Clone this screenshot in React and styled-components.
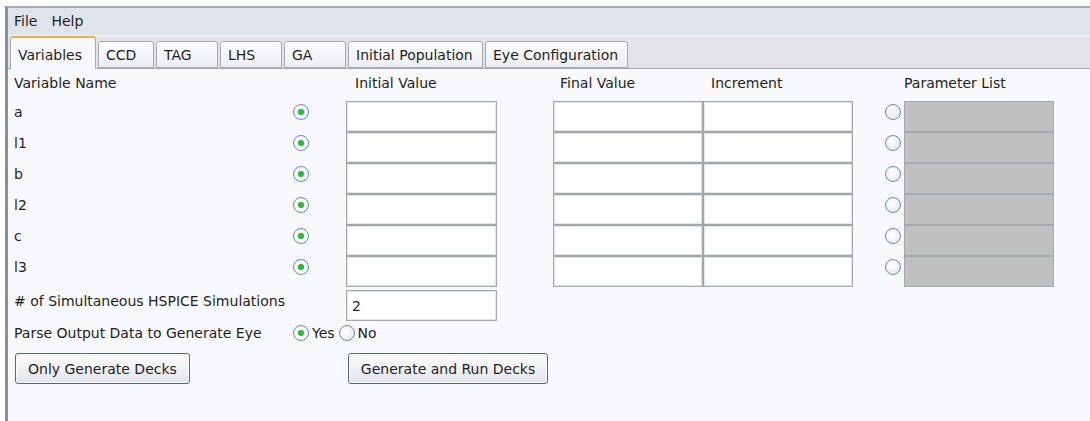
import styled, { createGlobalStyle } from "styled-components";

const GlobalStyle = createGlobalStyle`
  html, body {
    margin: 0;
    background: #ffffff;
  }
  body {
    font-family: "DejaVu Sans", "Liberation Sans", sans-serif;
    font-size: 14px;
    color: #1e1e22;
  }
`;

const Frame = styled.div`
  margin: 6px 0 0 5px;
  height: 413px;
  border-left: 3px solid #8a8f98;
  border-top: 2px solid #a7acbd;
  background: #f8f9fc;
  display: flex;
  flex-direction: column;
  overflow: hidden;
`;

const MenuBar = styled.div`
  height: 27px;
  background: #dfe3ec;
  border-bottom: 2px solid #eceef3;
  display: flex;
  align-items: center;
  gap: 14px;
  padding-left: 6px;
`;

const MenuItem = styled.span`
  line-height: 20px;
  margin-top: -2px;
`;

const TabStrip = styled.div`
  height: 32px;
  box-sizing: border-box;
  background: #e2e2e7;
  border-bottom: 1px solid #a3a8b2;
  display: flex;
  align-items: flex-end;
  gap: 2px;
  padding-left: 2px;
`;

const Tab = styled.div`
  width: ${(p) => p.$w}px;
  box-sizing: border-box;
  height: ${(p) => (p.$active ? 33 : 27)}px;
  margin-bottom: ${(p) => (p.$active ? -1 : 0)}px;
  padding: ${(p) => (p.$active ? "3px" : "0")} 7px 0;
  display: flex;
  align-items: center;
  border: 1px solid #a4aab4;
  border-bottom: ${(p) => (p.$active ? "none" : "1px solid #a4aab4")};
  border-top: ${(p) => (p.$active ? "2px solid #f2b040" : "1px solid #a4aab4")};
  border-radius: 3px 3px 0 0;
  background: ${(p) =>
    p.$active ? "#f8f9fc" : "linear-gradient(#fdfdfe, #eceef2)"};
  white-space: nowrap;
`;

const Body = styled.div`
  padding-left: 6px;
  display: flex;
  flex-direction: column;
`;

const HeaderRow = styled.div`
  height: 32px;
  display: flex;
  align-items: flex-start;
  padding-top: 3px;
  box-sizing: border-box;
  line-height: 22px;
`;

const Heading = styled.span`
  width: ${(p) => p.$w}px;
  padding-left: ${(p) => p.$pad || 0}px;
  box-sizing: border-box;
  flex-shrink: 0;
`;

const Row = styled.div`
  height: ${(p) => p.$h || 31}px;
  margin-top: ${(p) => p.$mt || 0}px;
  display: flex;
  align-items: flex-start;
`;

const Label = styled.span`
  width: ${(p) => p.$w || 279}px;
  flex-shrink: 0;
  line-height: 22px;
  white-space: nowrap;
`;

const Radio = styled.span`
  width: 16px;
  height: 16px;
  margin-top: 3px;
  margin-left: ${(p) => p.$ml || 0}px;
  flex-shrink: 0;
  box-sizing: border-box;
  border-radius: 50%;
  border: 1.5px solid #6c8cae;
  background: ${(p) =>
    p.$checked
      ? "radial-gradient(circle, #ffffff 40%, #e6e9ee)"
      : "radial-gradient(circle at 40% 40%, #ffffff 10%, #dcdfe4)"};
  display: flex;
  align-items: center;
  justify-content: center;

  &::after {
    content: "";
    display: ${(p) => (p.$checked ? "block" : "none")};
    width: 6px;
    height: 6px;
    border-radius: 50%;
    background: #2eb83b;
    box-shadow: 0 0 2px #7fd587;
  }
`;

const Field = styled.div`
  width: ${(p) => p.$w || 151}px;
  height: 31px;
  margin-left: ${(p) => p.$ml || 0}px;
  flex-shrink: 0;
  box-sizing: border-box;
  border: 1px solid #a2a7ac;
  box-shadow: inset 0 0 0 1px #e2e4e7;
  background: #ffffff;
  padding: 4px 0 0 5px;
  line-height: 22px;
`;

const ParamBox = styled.div`
  width: 150px;
  height: 31px;
  margin-left: 3px;
  flex-shrink: 0;
  box-sizing: border-box;
  border: 1px solid #a3a9af;
  background: #c0c0c0;
`;

const OptionText = styled.span`
  margin-left: 3px;
  line-height: 22px;
`;

const ButtonRow = styled.div`
  margin-top: 4px;
  display: flex;
  align-items: flex-start;
`;

const Button = styled.button`
  height: 31px;
  margin-left: ${(p) => p.$ml || 0}px;
  padding: 0 12px;
  font: inherit;
  color: #1e1e22;
  border: 1px solid #50698a;
  border-radius: 3px;
  background: linear-gradient(#fcfcfe, #e3e5ed);
  box-shadow: inset 0 0 0 1px #ffffff;
  cursor: pointer;
`;

const tabs = [
  { name: "Variables", w: 86 },
  { name: "CCD", w: 56 },
  { name: "TAG", w: 62 },
  { name: "LHS", w: 62 },
  { name: "GA", w: 62 },
  { name: "Initial Population", w: 135 },
  { name: "Eye Configuration", w: 143 },
];

const variables = ["a", "l1", "b", "l2", "c", "l3"];

export default function App() {
  return (
    <>
      <GlobalStyle />
      <Frame>
        <MenuBar>
          <MenuItem>File</MenuItem>
          <MenuItem>Help</MenuItem>
        </MenuBar>
        <TabStrip>
          {tabs.map((t, i) => (
            <Tab key={t.name} $w={t.w} $active={i === 0}>
              {t.name}
            </Tab>
          ))}
        </TabStrip>
        <Body>
          <HeaderRow>
            <Heading $w={332}>Variable Name</Heading>
            <Heading $w={207} $pad={9}>Initial Value</Heading>
            <Heading $w={150} $pad={7}>Final Value</Heading>
            <Heading $w={201} $pad={8}>Increment</Heading>
            <Heading $w={150}>Parameter List</Heading>
          </HeaderRow>

          {variables.map((v) => (
            <Row key={v}>
              <Label>{v}</Label>
              <Radio $checked />
              <Field $ml={37} />
              <Field $ml={56} $w={150} />
              <Field $w={150} />
              <Radio $ml={32} />
              <ParamBox />
            </Row>
          ))}

          <Row $mt={3}>
            <Label $w={332}># of Simultaneous HSPICE Simulations</Label>
            <Field>2</Field>
          </Row>

          <Row $h={27} $mt={1}>
            <Label>Parse Output Data to Generate Eye</Label>
            <Radio $checked />
            <OptionText>Yes</OptionText>
            <Radio $ml={4} />
            <OptionText>No</OptionText>
          </Row>

          <ButtonRow>
            <Button $ml={1}>Only Generate Decks</Button>
            <Button $ml={158}>Generate and Run Decks</Button>
          </ButtonRow>
        </Body>
      </Frame>
    </>
  );
}
